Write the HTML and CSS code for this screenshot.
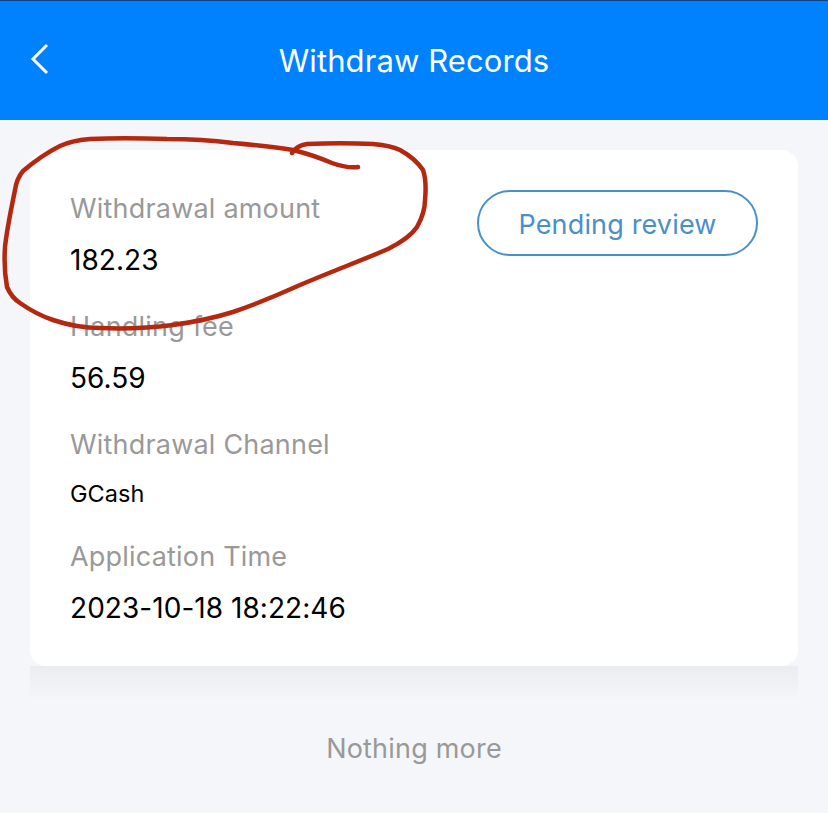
FILE: index.html
```html
<!DOCTYPE html>
<html lang="en">
<head>
    <meta charset="UTF-8">
    <meta name="viewport" content="width=device-width, initial-scale=1.0">
    <title>Withdraw Records</title>
    <link rel="stylesheet" href="styles.css">
</head>
<body>
    <div class="page">
        <div class="header">
            <svg class="back-icon" viewBox="0 0 20 32">
                <path d="M17 2 L3 16 L17 30"/>
            </svg>
            <div class="title">Withdraw Records</div>
        </div>

        <div class="content">
            <div class="card">
                <div class="details">
                    <div class="row">
                        <div class="label">Withdrawal amount</div>
                        <div class="value">182.23</div>
                    </div>
                    <div class="row">
                        <div class="label">Handling fee</div>
                        <div class="value">56.59</div>
                    </div>
                    <div class="row row-channel">
                        <div class="label">Withdrawal Channel</div>
                        <div class="value value-small">GCash</div>
                    </div>
                    <div class="row">
                        <div class="label">Application Time</div>
                        <div class="value">2023-10-18 18:22:46</div>
                    </div>
                </div>
                <div class="badge">Pending review</div>
            </div>
            <div class="end-note">Nothing more</div>
        </div>

        <!-- red marker ring drawn over the first row -->
        <svg class="marker" viewBox="0 0 828 813">
            <path d="M358 167 C350 168 343 167 332 163 C318 157 305 153 293 150 C275 147 255 145 233 143 C210 140 190 139 167 139 C140 138 110 138 90 139 C78 140 68 142 60 146 C48 152 36 160 23 171 C18 177 16 183 15 190 C11 210 7 228 5 247 C4 262 5 276 7 287 C10 294 14 299 20 303 C30 310 41 316 53 320 C68 325 84 328 100 328 C125 329 150 328 173 325 C194 322 214 318 233 312 C256 304 278 295 300 285 C333 271 365 259 388 249 C400 243 411 236 417 227 C422 218 425 209 425 200 C426 190 426 179 423 170 C417 161 409 155 400 150 C392 146 383 145 373 144 C352 143 330 143 307 144 C300 145 295 148 292 153"/>
        </svg>
    </div>
</body>
</html>
```

FILE: styles.css
```css
* {
    margin: 0;
    padding: 0;
    box-sizing: border-box;
}

body {
    font-family: Inter, "Noto Sans", sans-serif;
    background: #f5f6fa;
}

.page {
    position: relative;
    width: 828px;
    height: 813px;
    overflow: hidden;
}

.header {
    height: 120px;
    background: #0081fe;
    border-top: 1px solid #123f86;
    display: flex;
    align-items: center;
    justify-content: center;
    position: relative;
}

.back-icon {
    position: absolute;
    left: 30px;
    top: 42px;
    width: 20px;
    height: 32px;
    fill: none;
    stroke: #fff;
    stroke-width: 3;
}

.title {
    font-size: 31px;
    letter-spacing: 0.1px;
    color: #fff;
}

.content {
    padding: 30px 30px 0;
}

.card {
    position: relative;
    height: 516px;
    background: #fff;
    border-radius: 16px;
    padding: 41px 40px 0;
    display: flex;
    justify-content: space-between;
    align-items: flex-start;
}

/* soft band of shade under the card */
.card::after {
    content: "";
    position: absolute;
    top: 100%;
    left: 0;
    right: 0;
    height: 36px;
    background: linear-gradient(#ebecf0, #f5f6fa);
}

.row {
    height: 118px;
}

.row-channel {
    height: 112px;
}

.label {
    font-size: 27px;
    letter-spacing: 0.2px;
    line-height: 36px;
    color: #999;
}

.value {
    font-size: 28px;
    letter-spacing: 0.05px;
    line-height: 36px;
    margin-top: 15px;
    color: #000;
}

.value-small {
    font-size: 23.5px;
    margin-top: 13px;
}

.badge {
    width: 281px;
    height: 66px;
    margin-top: -1px;
    padding-top: 2px;
    border: 2px solid #4a90c8;
    border-radius: 33px;
    display: flex;
    align-items: center;
    justify-content: center;
    font-size: 27px;
    letter-spacing: 0.15px;
    color: #4a90c8;
}

.end-note {
    text-align: center;
    font-size: 27px;
    letter-spacing: 0.2px;
    line-height: 36px;
    margin-top: 65px;
    color: #999;
}

.marker {
    position: absolute;
    left: 0;
    top: 0;
    width: 828px;
    height: 813px;
    fill: none;
    stroke: #b3280f;
    stroke-width: 4.5;
    stroke-linecap: round;
    stroke-linejoin: round;
}
```
